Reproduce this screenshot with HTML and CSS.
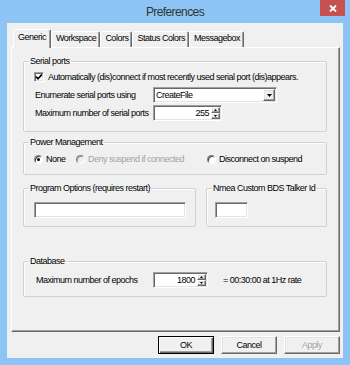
FILE: index.html
```html
<!DOCTYPE html>
<html lang="en">
<head>
<meta charset="utf-8">
<title>Preferences</title>
<link rel="stylesheet" href="styles.css">
</head>
<body>
<div class="window">
  <div class="titlebar">
    <span class="title">Preferences</span>
    <span class="close"><svg width="8" height="7" viewBox="0 0 8 7"><path d="M1 0.5 L7 6.5 M7 0.5 L1 6.5" stroke="#fff" stroke-width="1.8" fill="none"/></svg></span>
  </div>
  <div class="client">
    <div class="tabs">
      <div class="tab active">Generic</div>
      <div class="tab">Workspace</div>
      <div class="tab">Colors</div>
      <div class="tab">Status Colors</div>
      <div class="tab">Messagebox</div>
    </div>
    <div class="panel">
      <fieldset class="group g-serial">
        <legend>Serial ports</legend>
        <div class="gbody serial-body">
          <div class="check-row">
            <span class="checkbox sunken"><svg width="8" height="8" viewBox="0 0 8 8"><path d="M1 3.6 L3 5.8 L7 1.4" stroke="#000" stroke-width="1.6" fill="none"/></svg></span>
            <span>Automatically (dis)connect if most recently used serial port (dis)appears.</span>
          </div>
          <div class="field-row combo-row">
            <span class="label">Enumerate serial ports using</span>
            <div class="combo sunken">
              <span class="combo-text">CreateFile</span>
              <span class="combo-btn raised"><svg width="5" height="3" viewBox="0 0 5 3"><path d="M0 0 H5 L2.5 3 Z" fill="#000"/></svg></span>
            </div>
          </div>
          <div class="field-row spin-row">
            <span class="label">Maximum number of serial ports</span>
            <div class="spin spin-serial sunken">
              <span class="spin-val">255</span>
              <span class="updown">
                <span class="ud raised"><svg width="3" height="2" viewBox="0 0 3 2"><path d="M0 2 H3 L1.5 0 Z" fill="#000"/></svg></span>
                <span class="ud raised"><svg width="3" height="2" viewBox="0 0 3 2"><path d="M0 0 H3 L1.5 2 Z" fill="#000"/></svg></span>
              </span>
            </div>
          </div>
        </div>
      </fieldset>

      <fieldset class="group g-power">
        <legend>Power Management</legend>
        <div class="gbody power-body">
          <label class="radio-item"><span class="radio checked"></span><span>None</span></label>
          <label class="radio-item disabled"><span class="radio"></span><span>Deny suspend if connected</span></label>
          <label class="radio-item"><span class="radio"></span><span>Disconnect on suspend</span></label>
        </div>
      </fieldset>

      <div class="group-row">
        <fieldset class="group g-options">
          <legend>Program Options (requires restart)</legend>
          <div class="gbody options-body">
            <div class="edit edit-options sunken"></div>
          </div>
        </fieldset>
        <fieldset class="group g-nmea">
          <legend>Nmea Custom BDS Talker Id</legend>
          <div class="gbody nmea-body">
            <div class="edit edit-nmea sunken"></div>
          </div>
        </fieldset>
      </div>

      <fieldset class="group g-db">
        <legend>Database</legend>
        <div class="gbody db-body">
          <span class="label">Maximum number of epochs</span>
          <div class="spin spin-db sunken">
            <span class="spin-val">1800</span>
            <span class="updown">
              <span class="ud raised"><svg width="3" height="2" viewBox="0 0 3 2"><path d="M0 2 H3 L1.5 0 Z" fill="#000"/></svg></span>
              <span class="ud raised"><svg width="3" height="2" viewBox="0 0 3 2"><path d="M0 0 H3 L1.5 2 Z" fill="#000"/></svg></span>
            </span>
          </div>
          <span class="db-note">= 00:30:00 at 1Hz rate</span>
        </div>
      </fieldset>
    </div>
    <div class="buttons">
      <div class="btn raised default">OK</div>
      <div class="btn raised">Cancel</div>
      <div class="btn raised disabled">Apply</div>
    </div>
  </div>
</div>
</body>
</html>
```

FILE: styles.css
```css
* { box-sizing: border-box; }
html, body { margin: 0; padding: 0; }
body {
  width: 350px;
  height: 365px;
  overflow: hidden;
  background: #8cc5f5;
  font-family: "Liberation Sans", Arial, sans-serif;
  font-size: 9px;
  letter-spacing: -0.5px;
  color: #000;
}
.window {
  width: 350px;
  height: 365px;
  display: flex;
  flex-direction: column;
  background: #8cc5f5;
}
.titlebar {
  height: 23px;
  display: grid;
  grid-template-columns: 1fr auto 1fr;
  align-items: start;
}
.title {
  grid-column: 2;
  font-size: 12px;
  letter-spacing: -0.6px;
  color: #333;
  line-height: 24px;
}
.close {
  grid-column: 3;
  justify-self: end;
  margin-right: 5px;
  width: 25px;
  height: 16px;
  background: #c75050;
  display: flex;
  align-items: center;
  justify-content: center;
}
.client {
  margin: 0 7px;
  height: 335px;
  background: #f0f0f0;
  padding: 6px 3px 0 4px;
  display: flex;
  flex-direction: column;
}
.tabs {
  height: 18px;
  display: flex;
  align-items: flex-end;
  padding-left: 2px;
  position: relative;
  z-index: 1;
}
.tab {
  height: 16px;
  padding: 0 3px 0 4px;
  line-height: 12px;
  border-top: 1px solid #fff;
  border-left: 1px solid #fff;
  border-right: 1px solid #696969;
  box-shadow: inset -1px 0 0 #a0a0a0;
  border-radius: 2px 2px 0 0;
  white-space: nowrap;
  background: #f0f0f0;
}
.tab.active {
  height: 19px;
  margin-bottom: -1px;
  padding: 1px 4px 0;
}
.panel {
  height: 285px;
  border: 1px solid;
  border-color: #fff #696969 #696969 #fff;
  box-shadow: inset -1px -1px 0 #a0a0a0;
  padding: 7px 12px 0 11px;
  display: flex;
  flex-direction: column;
}
.group {
  margin: 0;
  padding: 0;
  min-width: 0;
  border: 1px solid #d0d0d0;
  border-radius: 2px;
  box-shadow: inset 1px 1px 0 #fff;
}
.group legend {
  margin-left: 5px;
  padding: 0 1px;
  line-height: 12px;
}
.sunken {
  background: #fff;
  border: 1px solid;
  border-color: #a0a0a0 #fff #fff #a0a0a0;
  box-shadow: inset 1px 1px 0 #696969, inset -1px -1px 0 #e3e3e3;
}
.raised {
  background: #f0f0f0;
  border: 1px solid;
  border-color: #fff #696969 #696969 #fff;
  box-shadow: inset -1px -1px 0 #a0a0a0, inset 1px 1px 0 #e3e3e3;
}

/* Serial ports */
.serial-body { padding: 4px 0 10px 11px; }
.check-row {
  height: 12px;
  display: flex;
  align-items: center;
  gap: 4px;
  line-height: 12px;
  white-space: nowrap;
}
.checkbox {
  width: 10px;
  height: 10px;
  margin-left: -1px;
  display: flex;
  align-items: center;
  justify-content: center;
}
.field-row {
  display: grid;
  grid-template-columns: 118px auto;
  height: 16px;
  line-height: 16px;
  white-space: nowrap;
}
.combo-row { margin-top: 4px; }
.spin-row { margin-top: 2px; }
.combo {
  width: 124px;
  height: 16px;
  padding: 1px;
  display: flex;
}
.combo-text {
  flex: 1;
  padding-left: 1px;
  line-height: 12px;
}
.combo-btn {
  width: 12px;
  display: flex;
  align-items: center;
  justify-content: center;
}
.spin {
  height: 16px;
  padding: 1px;
  display: flex;
}
.spin-serial { width: 69px; }
.spin-db { width: 55px; }
.spin-val {
  flex: 1;
  text-align: right;
  padding-right: 2px;
  line-height: 12px;
}
.updown {
  width: 9px;
  display: flex;
  flex-direction: column;
}
.ud {
  flex: 1;
  display: flex;
  align-items: center;
  justify-content: center;
}

/* Power */
.g-power { margin-top: 4px; }
.power-body {
  padding: 5px 0 9px 10px;
  display: grid;
  grid-template-columns: 42px 131px auto;
  height: 26px;
}
.radio-item {
  display: flex;
  align-items: center;
  gap: 3px;
  height: 12px;
  line-height: 12px;
  white-space: nowrap;
}
.radio {
  width: 9px;
  height: 9px;
  border-radius: 50%;
  background: #fff;
  border: 1px solid;
  border-color: #808080 #fff #fff #808080;
  box-shadow: inset 1px 1px 0 #404040;
  display: flex;
  align-items: center;
  justify-content: center;
}
.radio.checked::after {
  content: "";
  width: 3px;
  height: 3px;
  border-radius: 50%;
  background: #000;
}
.radio-item.disabled { color: #a3a3a3; }
.radio-item.disabled .radio { background: #f0f0f0; box-shadow: inset 1px 1px 0 #a0a0a0; }

/* Options row */
.group-row {
  margin-top: 7px;
  display: flex;
  gap: 10px;
}
.g-options { width: 173px; }
.g-nmea { width: 121px; }
.options-body { padding: 8px 0 8px 10px; }
.nmea-body { padding: 8px 0 8px 8px; }
.edit { height: 16px; }
.edit-options { width: 152px; }
.edit-nmea { width: 33px; }

/* Database */
.g-db { margin-top: 28px; }
.db-body {
  padding: 5px 0 8px 12px;
  display: grid;
  grid-template-columns: 117px 55px auto;
  line-height: 16px;
  white-space: nowrap;
}
.db-note { margin-left: 15px; }

/* Buttons */
.buttons {
  margin-top: 4px;
  display: flex;
  justify-content: flex-end;
  gap: 7px;
}
.btn {
  width: 56px;
  height: 18px;
  text-align: center;
  line-height: 16px;
}
.btn.default {
  border-color: #000;
  box-shadow: inset 1px 1px 0 #fff, inset -1px -1px 0 #696969, inset -2px -2px 0 #a0a0a0;
}
.btn.disabled {
  color: #a0a0a0;
  text-shadow: 1px 1px 0 #fff;
}
```
